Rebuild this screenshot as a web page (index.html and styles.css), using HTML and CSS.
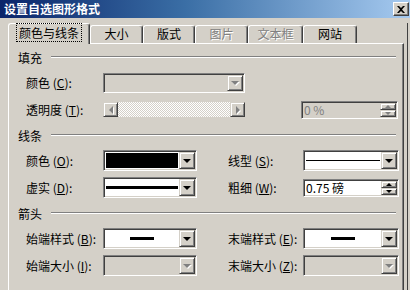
FILE: index.html
```html
<!DOCTYPE html>
<html lang="zh-CN">
<head>
  <meta charset="UTF-8">
  <meta name="viewport" content="width=device-width, initial-scale=1.0">
  <title>设置自选图形格式</title>
  <link rel="stylesheet" href="styles.css">
</head>
<body>
  <div class="dialog">
    <div class="title-bar">
      <span class="title-text">设置自选图形格式</span>
      <span class="close-btn">
        <svg width="8" height="7" viewBox="0 0 8 7"><path d="M0 0h2l2 2 2-2h2L5 3.5 8 7H6L4 5 2 7H0l3-3.5z" fill="#000"/></svg>
      </span>
    </div>

    <div class="dialog-body">
      <div class="tabs">
        <div class="tab tab-colors active"><span class="focus">颜色与线条</span></div>
        <div class="tab tab-size">大小</div>
        <div class="tab tab-layout">版式</div>
        <div class="tab tab-picture disabled">图片</div>
        <div class="tab tab-textbox disabled">文本框</div>
        <div class="tab tab-web">网站</div>
      </div>

      <div class="panel">
        <!-- 填充 -->
        <div class="group-title">填充</div>
        <div class="row">
          <span class="lbl">颜色 (<u>C</u>):</span>
          <div class="combo wide disabled">
            <div class="combo-value"></div>
            <span class="drop-btn"><i class="arrow-down"></i></span>
          </div>
        </div>
        <div class="row">
          <span class="lbl">透明度 (<u>T</u>):</span>
          <div class="scrollbar">
            <span class="sb-btn"><i class="arrow-left"></i></span>
            <span class="sb-track"></span>
            <span class="sb-btn"><i class="arrow-right"></i></span>
          </div>
          <div class="spin disabled spin-alpha">
            <span class="spin-text">0 %</span>
            <span class="spin-btns">
              <span class="spin-btn"><i class="tri-up"></i></span>
              <span class="spin-btn"><i class="tri-down"></i></span>
            </span>
          </div>
        </div>

        <!-- 线条 -->
        <div class="group-title">线条</div>
        <div class="row">
          <span class="lbl">颜色 (<u>O</u>):</span>
          <div class="combo">
            <div class="combo-value"><span class="swatch"></span></div>
            <span class="drop-btn"><i class="arrow-down"></i></span>
          </div>
          <span class="lbl lbl-right">线型 (<u>S</u>):</span>
          <div class="combo right">
            <div class="combo-value"><span class="line thin"></span></div>
            <span class="drop-btn"><i class="arrow-down"></i></span>
          </div>
        </div>
        <div class="row">
          <span class="lbl">虚实 (<u>D</u>):</span>
          <div class="combo">
            <div class="combo-value"><span class="line thick"></span></div>
            <span class="drop-btn"><i class="arrow-down"></i></span>
          </div>
          <span class="lbl lbl-right">粗细 (<u>W</u>):</span>
          <div class="spin right">
            <span class="spin-text">0.75 磅</span>
            <span class="spin-btns">
              <span class="spin-btn"><i class="tri-up"></i></span>
              <span class="spin-btn"><i class="tri-down"></i></span>
            </span>
          </div>
        </div>

        <!-- 箭头 -->
        <div class="group-title">箭头</div>
        <div class="row">
          <span class="lbl">始端样式 (<u>B</u>):</span>
          <div class="combo">
            <div class="combo-value"><span class="line short"></span></div>
            <span class="drop-btn"><i class="arrow-down"></i></span>
          </div>
          <span class="lbl lbl-right">末端样式 (<u>E</u>):</span>
          <div class="combo right">
            <div class="combo-value"><span class="line short"></span></div>
            <span class="drop-btn"><i class="arrow-down"></i></span>
          </div>
        </div>
        <div class="row">
          <span class="lbl">始端大小 (<u>I</u>):</span>
          <div class="combo disabled">
            <div class="combo-value"></div>
            <span class="drop-btn"><i class="arrow-down"></i></span>
          </div>
          <span class="lbl lbl-right">末端大小 (<u>Z</u>):</span>
          <div class="combo right disabled">
            <div class="combo-value"></div>
            <span class="drop-btn"><i class="arrow-down"></i></span>
          </div>
        </div>
      </div>
    </div>
  </div>
</body>
</html>
```

FILE: styles.css
```css
body {
  margin: 0;
  padding: 0;
  background-color: #d4d0c8;
  font-family: 'Noto Sans CJK SC', sans-serif;
  font-size: 12px;
  color: #000;
  overflow: hidden;
}

.dialog {
  width: 410px;
  height: 290px;
  overflow: hidden;
}

/* title bar */
.title-bar {
  height: 18px;
  display: flex;
  align-items: center;
  justify-content: space-between;
  padding-left: 4px;
  background: linear-gradient(to right, #0a246a, #3a6ea5 45%, #a6caf0);
}

.title-text {
  color: #fff;
  font-weight: 700;
  font-size: 12px;
  line-height: 18px;
}

.close-btn {
  width: 16px;
  height: 14px;
  margin-right: 1px;
  box-sizing: border-box;
  display: flex;
  align-items: center;
  justify-content: center;
  background-color: #d4d0c8;
  border: 1px solid;
  border-color: #fff #404040 #404040 #fff;
  box-shadow: inset -1px -1px #808080;
}

.dialog-body {
  height: 272px;
  width: 408px;
  box-sizing: border-box;
  border-right: 1px solid #404040;
}

/* tabs */
.tabs {
  display: flex;
  align-items: flex-end;
  height: 21px;
  margin: 5px 0 -1px 8px;
  position: relative;
  z-index: 1;
}

.tab {
  height: 18px;
  margin-bottom: 1px;
  box-sizing: border-box;
  border: 1px solid;
  border-color: #fff #404040 transparent #fff;
  border-bottom: none;
  border-radius: 3px 3px 0 0;
  box-shadow: inset -1px 0 #808080;
  background-color: #d4d0c8;
  text-align: center;
  line-height: 16px;
}

.tab-colors { width: 82px; }
.tab-size { width: 53px; }
.tab-layout { width: 52px; }
.tab-picture { width: 53px; }
.tab-textbox { width: 55px; }
.tab-web { width: 54px; }

.tab.active {
  height: 21px;
  margin-bottom: 0;
  line-height: 18px;
}

.tab.disabled {
  color: #808080;
  text-shadow: 1px 1px #fff;
}

.focus {
  outline: 1px dotted #000;
  outline-offset: 0;
  padding: 0 2px;
}

/* tab page */
.panel {
  margin-left: 8px;
  width: 396px;
  height: 260px;
  box-sizing: border-box;
  border-top: 1px solid #fff;
  border-left: 1px solid #fff;
  border-right: 1px solid #404040;
  box-shadow: inset -1px 0 #808080;
  padding-top: 1px;
}

.group-title {
  display: flex;
  align-items: center;
  height: 16px;
  margin: 4px 0;
  padding-left: 9px;
}

.group-title::after {
  content: '';
  flex: 1;
  margin: 0 7px 0 9px;
  border-top: 1px solid #808080;
  border-bottom: 1px solid #fff;
}

.row {
  display: flex;
  align-items: center;
  height: 27px;
  padding-left: 17px;
}

.lbl {
  width: 77px;
  white-space: nowrap;
}

.lbl-right {
  margin-left: 31px;
  width: 75px;
}

/* combo boxes */
.combo {
  width: 94px;
  height: 21px;
  box-sizing: border-box;
  display: flex;
  padding: 1px;
  border: 1px solid;
  border-color: #808080 #fff #fff #808080;
  box-shadow: inset 1px 1px #404040, inset -1px -1px #d4d0c8;
  background-color: #fff;
}

.combo.wide {
  width: 142px;
  height: 20px;
}

.combo.right {
  width: 96px;
}

.combo-value {
  flex: 1;
  display: flex;
  align-items: center;
  justify-content: center;
  padding: 1px;
}

.combo.disabled {
  background-color: #d4d0c8;
}

.drop-btn {
  width: 16px;
  box-sizing: border-box;
  display: flex;
  align-items: center;
  justify-content: center;
  background-color: #d4d0c8;
  border: 1px solid;
  border-color: #d4d0c8 #404040 #404040 #d4d0c8;
  box-shadow: inset 1px 1px #fff, inset -1px -1px #808080;
}

.arrow-down {
  width: 0;
  height: 0;
  border-left: 4px solid transparent;
  border-right: 4px solid transparent;
  border-top: 4px solid #000;
}

.disabled .arrow-down {
  border-top-color: #808080;
  filter: drop-shadow(1px 1px 0 #fff);
}

.swatch {
  flex: 1;
  align-self: stretch;
  background-color: #000;
}

.line {
  display: block;
  background-color: #000;
}

.line.thin {
  flex: 1;
  height: 1px;
}

.line.thick {
  flex: 1;
  height: 3px;
}

.line.short {
  width: 24px;
  height: 3px;
}

/* scroll bar */
.scrollbar {
  width: 142px;
  height: 15px;
  display: flex;
}

.sb-btn {
  width: 15px;
  box-sizing: border-box;
  display: flex;
  align-items: center;
  justify-content: center;
  background-color: #d4d0c8;
  border: 1px solid;
  border-color: #d4d0c8 #404040 #404040 #d4d0c8;
  box-shadow: inset 1px 1px #fff, inset -1px -1px #808080;
}

.sb-track {
  flex: 1;
  background: repeating-conic-gradient(#fff 0 25%, #d4d0c8 0 50%) 0 0 / 2px 2px;
}

.arrow-left,
.arrow-right {
  width: 0;
  height: 0;
  border-top: 4px solid transparent;
  border-bottom: 4px solid transparent;
  filter: drop-shadow(1px 1px 0 #fff);
}

.arrow-left {
  border-right: 4px solid #808080;
}

.arrow-right {
  border-left: 4px solid #808080;
}

/* spin boxes */
.spin {
  width: 96px;
  height: 18px;
  box-sizing: border-box;
  display: flex;
  align-items: stretch;
  padding: 1px;
  border: 1px solid;
  border-color: #808080 #fff #fff #808080;
  box-shadow: inset 1px 1px #404040, inset -1px -1px #d4d0c8;
  background-color: #fff;
}

.spin-alpha {
  margin-left: 56px;
  width: 97px;
}

.spin.disabled {
  background-color: #d4d0c8;
  color: #808080;
}

.spin-text {
  flex: 1;
  line-height: 14px;
  padding-left: 1px;
}

.spin-btns {
  width: 16px;
  display: flex;
  flex-direction: column;
}

.spin-btn {
  flex: 1;
  box-sizing: border-box;
  display: flex;
  align-items: center;
  justify-content: center;
  background-color: #d4d0c8;
  border: 1px solid;
  border-color: #d4d0c8 #404040 #404040 #d4d0c8;
  box-shadow: inset 1px 1px #fff, inset -1px -1px #808080;
}

.tri-up,
.tri-down {
  width: 0;
  height: 0;
  border-left: 3px solid transparent;
  border-right: 3px solid transparent;
}

.tri-up {
  border-bottom: 3px solid #000;
}

.tri-down {
  border-top: 3px solid #000;
}

.spin.disabled .tri-up {
  border-bottom-color: #808080;
}

.spin.disabled .tri-down {
  border-top-color: #808080;
}
```
